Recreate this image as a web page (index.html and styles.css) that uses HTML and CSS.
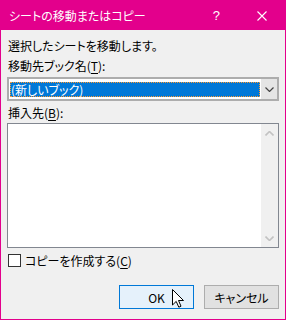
FILE: index.html
```html
<!DOCTYPE html>
<html lang="ja">
<head>
    <meta charset="UTF-8">
    <title>シートの移動またはコピー</title>
    <link rel="stylesheet" href="styles.css">
</head>
<body>
    <div class="dialog">
        <!-- Title bar -->
        <div class="titlebar">
            <span class="title">シートの移動またはコピー</span>
            <span class="help">?</span>
            <svg class="close" width="10" height="10" viewBox="0 0 10 10">
                <path d="M0.5 0.5 L9.5 9.5 M9.5 0.5 L0.5 9.5" stroke="#fff" stroke-width="1.1" fill="none"/>
            </svg>
        </div>

        <div class="content">
            <div class="line first">選択したシートを移動します。</div>
            <div class="line">移動先ブック名(<u>T</u>):</div>

            <div class="combo">
                <div class="combo-field"><div class="combo-selected">(新しいブック)</div></div>
                <div class="combo-button">
                    <svg width="9" height="5" viewBox="0 0 9 5">
                        <path d="M0.5 0.5 L4.5 4.5 L8.5 0.5" stroke="#444" stroke-width="1.2" fill="none"/>
                    </svg>
                </div>
            </div>

            <div class="line label-list">挿入先(<u>B</u>):</div>
            <div class="listbox">
                <div class="list-items"></div>
                <div class="scrollbar">
                    <svg width="9" height="5" viewBox="0 0 9 5">
                        <path d="M0.5 4.5 L4.5 0.5 L8.5 4.5" stroke="#c2c2c2" stroke-width="1.6" fill="none"/>
                    </svg>
                    <svg width="9" height="5" viewBox="0 0 9 5">
                        <path d="M0.5 0.5 L4.5 4.5 L8.5 0.5" stroke="#c2c2c2" stroke-width="1.6" fill="none"/>
                    </svg>
                </div>
            </div>

            <label class="check-row">
                <span class="checkbox"></span>
                <span>コピーを作成する(<u>C</u>)</span>
            </label>

            <div class="buttons">
                <button class="btn btn-ok">OK</button>
                <button class="btn">キャンセル</button>
            </div>
        </div>

        <!-- mouse pointer over OK -->
        <svg class="cursor" width="12" height="19" viewBox="0 0 12 19">
            <path d="M0.5 0.5 L0.5 16 L4.2 12.4 L6.8 18.2 L9 17.2 L6.5 11.5 L11.5 11.5 Z" fill="#fff" stroke="#000" stroke-width="1"/>
        </svg>
    </div>
</body>
</html>
```

FILE: styles.css
```css
body {
    margin: 0;
}

.dialog {
    position: relative;
    width: 286px;
    height: 320px;
    box-sizing: border-box;
    border: 1px solid #e3008c;
    background-color: #f0f0f0;
    font-family: "Noto Sans CJK JP", "Noto Sans", sans-serif;
    font-size: 12px;
    font-feature-settings: "palt";
    color: #000;
}

.titlebar {
    height: 29px;
    background-color: #e3008c;
    color: #fff;
    display: flex;
    align-items: center;
    padding-left: 8px;
}
.title {
    flex: 1;
}
.help {
    font-family: "Liberation Sans", sans-serif;
    font-size: 13px;
    margin-right: 37px;
}
.close {
    margin-right: 18px;
}

.content {
    padding: 6px 6px 0 6px;
}

.line {
    line-height: 20px;
    padding-left: 1px;
}
.label-list {
    margin-top: 2px;
}

u {
    text-underline-offset: 2px;
}

.combo {
    margin-top: 1px;
    height: 24px;
    box-sizing: border-box;
    border: 2px solid #adadad;
    display: flex;
}
.combo-field {
    flex: 1;
    background-color: #fff;
    padding: 3px 1px 0 1px;
}
.combo-selected {
    height: 15px;
    line-height: 15px;
    background-color: #0078d7;
    color: #fff;
    outline: 1px dotted #ff9a2e;
    outline-offset: -1px;
    padding-left: 1px;
}
.combo-button {
    width: 16px;
    background-color: #e5e5e5;
    display: flex;
    align-items: center;
    justify-content: center;
}

.listbox {
    height: 125px;
    box-sizing: border-box;
    border: 1px solid #828790;
    display: flex;
}
.list-items {
    flex: 1;
    background-color: #fff;
}
.scrollbar {
    width: 17px;
    background-color: #f0f0f0;
    display: flex;
    flex-direction: column;
    justify-content: space-between;
    align-items: center;
    padding: 7px 0 6px 0;
}

.check-row {
    display: flex;
    align-items: center;
    height: 20px;
    margin-top: 2px;
    padding-left: 1px;
    gap: 4px;
}
.checkbox {
    width: 13px;
    height: 13px;
    box-sizing: border-box;
    border: 1px solid #333;
    background-color: #fff;
}

.buttons {
    display: flex;
    justify-content: flex-end;
    gap: 10px;
    margin-top: 15px;
}
.btn {
    width: 75px;
    height: 24px;
    box-sizing: border-box;
    border: 1px solid #adadad;
    background-color: #e1e1e1;
    font-family: inherit;
    font-size: 12px;
    font-feature-settings: "palt";
    color: #000;
    padding: 0;
}
.btn-ok {
    border-color: #0078d7;
    background-color: #e5f1fb;
}

.cursor {
    position: absolute;
    left: 171px;
    top: 288px;
}
```
